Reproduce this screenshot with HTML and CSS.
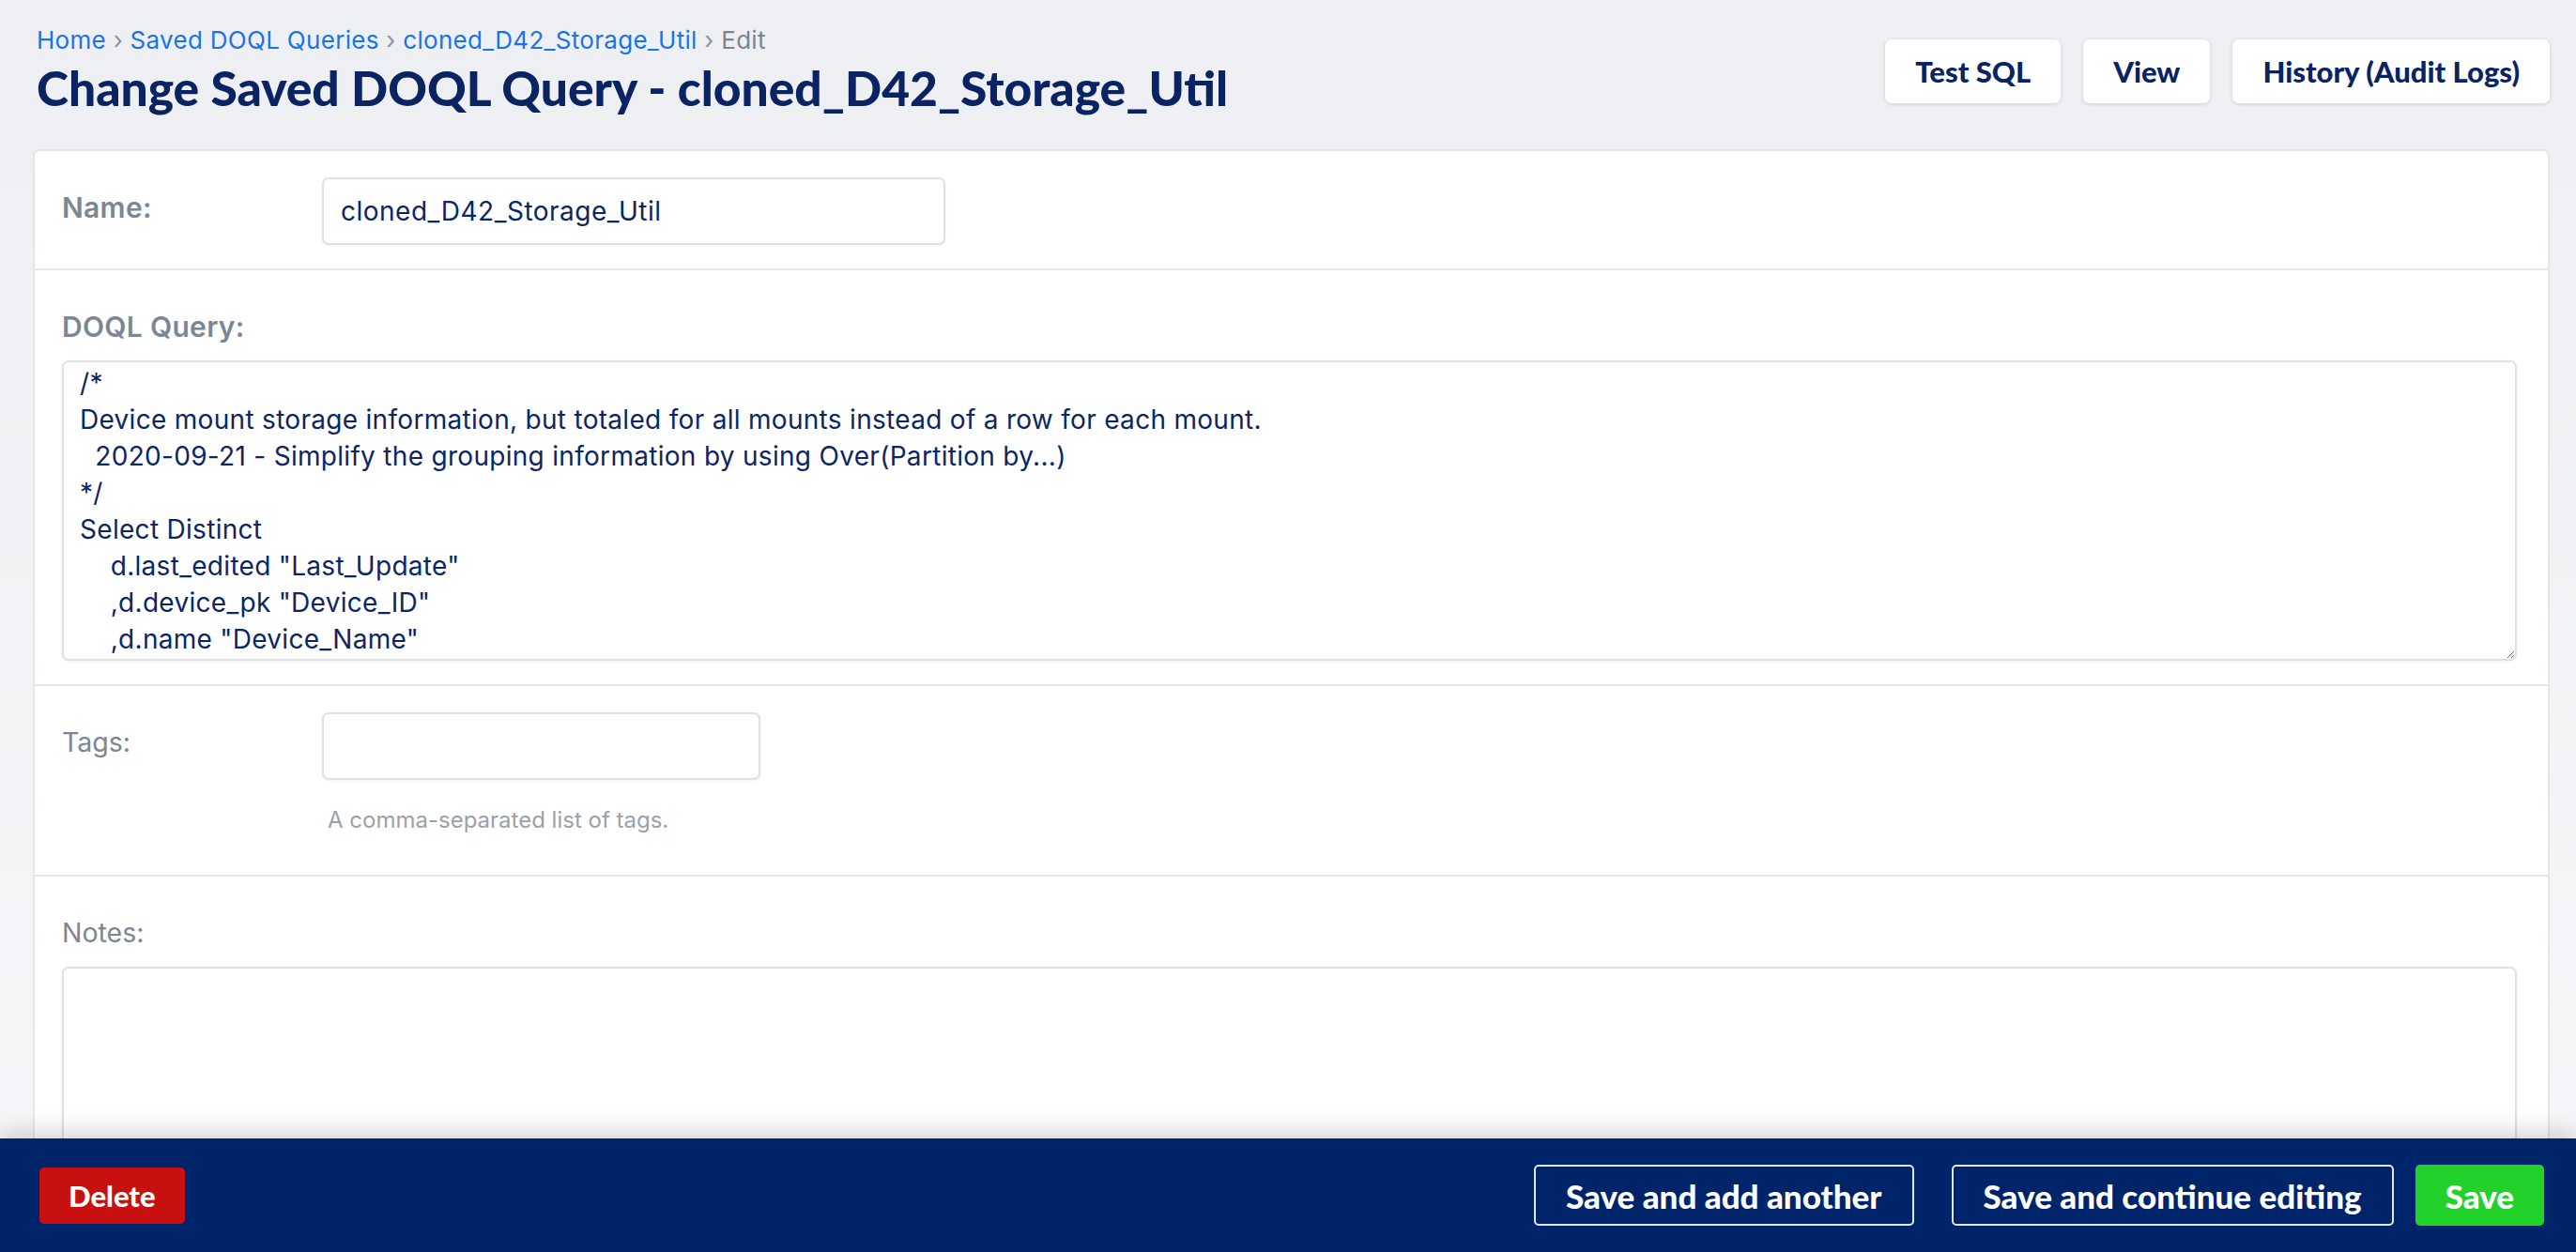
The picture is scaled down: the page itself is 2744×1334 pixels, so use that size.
FILE: index.html
```html
<!DOCTYPE html>
<html lang="en">
<head>
    <meta charset="UTF-8">
    <meta name="viewport" content="width=device-width, initial-scale=1.0">
    <title>Change Saved DOQL Query</title>
    <link rel="stylesheet" href="styles.css">
</head>
<body>
    <div class="page">
        <div class="header">
            <div class="header-text">
                <div class="breadcrumbs">
                    <a href="#">Home</a> <span class="sep">›</span>
                    <a href="#">Saved DOQL Queries</a> <span class="sep">›</span>
                    <a href="#">cloned_D42_Storage_Util</a> <span class="sep">›</span>
                    <span class="current">Edit</span>
                </div>
                <h1>Change Saved DOQL Query - cloned_D42_Storage_Util</h1>
            </div>
            <div class="header-actions">
                <a href="#" class="tool-button">Test SQL</a>
                <a href="#" class="tool-button">View</a>
                <a href="#" class="tool-button">History (Audit Logs)</a>
            </div>
        </div>

        <form class="card">
            <div class="form-row inline">
                <label class="field-label required" for="id_name">Name:</label>
                <div class="field">
                    <input type="text" id="id_name" class="text-input name-input" value="cloned_D42_Storage_Util">
                </div>
            </div>

            <div class="form-row">
                <label class="field-label required" for="id_query">DOQL Query:</label>
                <textarea id="id_query" class="text-area query-area">/*
Device mount storage information, but totaled for all mounts instead of a row for each mount.
  2020-09-21 - Simplify the grouping information by using Over(Partition by...)
*/
Select Distinct
    d.last_edited "Last_Update"
    ,d.device_pk "Device_ID"
    ,d.name "Device_Name"</textarea>
            </div>

            <div class="form-row inline">
                <label class="field-label" for="id_tags">Tags:</label>
                <div class="field">
                    <input type="text" id="id_tags" class="text-input tags-input">
                    <div class="help">A comma-separated list of tags.</div>
                </div>
            </div>

            <div class="form-row">
                <label class="field-label" for="id_notes">Notes:</label>
                <textarea id="id_notes" class="text-area notes-area"></textarea>
            </div>
        </form>
    </div>

    <div class="submit-row">
        <a href="#" class="delete-button">Delete</a>
        <div class="save-buttons">
            <button type="button" class="outline-button">Save and add another</button>
            <button type="button" class="outline-button">Save and continue editing</button>
            <button type="button" class="save-button">Save</button>
        </div>
    </div>
</body>
</html>
```

FILE: styles.css
```css
html, body {
    height: 100%;
}
body {
    margin: 0;
    font-family: Inter, "Noto Sans", sans-serif;
    color: #0b2663;
    background: linear-gradient(to bottom, #eeeff2, #f7f7fa);
    display: flex;
    flex-direction: column;
    overflow: hidden;
}
.page {
    flex: 1;
    overflow: hidden;
    padding: 0 28px 0 35px;
}
.header {
    display: flex;
    justify-content: space-between;
    align-items: flex-start;
    padding: 26px 0 0 4px;
}
.breadcrumbs {
    font-size: 26px;
    line-height: 34px;
    letter-spacing: 0.3px;
    color: #7b8591;
}
.breadcrumbs a {
    color: #1a73e8;
    text-decoration: none;
}
.breadcrumbs .sep {
    color: #8a939d;
}
h1 {
    margin: 3px 0 0 0;
    font-family: Lato, sans-serif;
    font-size: 51.5px;
    line-height: 60px;
    font-weight: 900;
    color: #0a2463;
}
.header-actions {
    display: flex;
    gap: 24px;
    margin-top: 16px;
}
.tool-button {
    display: flex;
    align-items: center;
    height: 68px;
    padding: 0 32px;
    box-sizing: border-box;
    background-color: white;
    border-radius: 7px;
    box-shadow: 0 1px 4px rgba(0, 0, 0, 0.14);
    color: #0a2463;
    font-family: Lato, sans-serif;
    font-size: 31px;
    font-weight: 900;
    text-decoration: none;
}
.card {
    margin: 36px 0 0 0;
    background-color: white;
    border: 2px solid #e4e6ea;
    border-radius: 7px;
}
.form-row {
    padding: 28px 33px 25px 29px;
    border-bottom: 2px solid #e4e6ea;
}
.form-row.inline {
    display: flex;
}
.field-label {
    display: block;
    padding-top: 12px;
    margin-bottom: 16px;
    font-size: 28.5px;
    line-height: 40px;
    color: #7b8794;
}
.form-row.inline .field-label {
    width: 277px;
    flex-shrink: 0;
    margin-bottom: 0;
}
.field-label.required {
    font-size: 30px;
    font-weight: 600;
    letter-spacing: 0.3px;
}
.text-input, .text-area {
    display: block;
    box-sizing: border-box;
    border: 2px solid #dfe1e5;
    border-radius: 7px;
    box-shadow: 0 1px 3px rgba(0, 0, 0, 0.06);
    background-color: white;
    font-family: Inter, "Noto Sans", sans-serif;
    font-size: 28px;
    letter-spacing: 0.3px;
    color: #0b2663;
    outline: none;
}
.text-input {
    height: 72px;
    padding: 0 18px;
}
.name-input {
    width: 664px;
    letter-spacing: 0.5px;
}
.tags-input {
    width: 467px;
}
.help {
    margin: 26px 0 16px 6px;
    font-size: 24px;
    line-height: 34px;
    color: #9ba1a9;
}
.text-area {
    width: 100%;
    line-height: 39px;
    padding: 3px 17px 0 17px;
    overflow: hidden;
}
.query-area {
    height: 320px;
}
.notes-area {
    height: 300px;
}
.submit-row {
    flex-shrink: 0;
    height: 121px;
    display: flex;
    align-items: center;
    justify-content: space-between;
    padding: 0 34px 0 42px;
    background-color: #00246a;
    box-shadow: 0 -6px 24px rgba(0, 0, 0, 0.18);
    position: relative;
}
.delete-button {
    display: flex;
    align-items: center;
    height: 60px;
    padding: 0 31px;
    box-sizing: border-box;
    background-color: #c81010;
    border-radius: 5px;
    color: white;
    font-family: Lato, sans-serif;
    font-size: 31px;
    font-weight: 900;
    text-decoration: none;
}
.save-buttons {
    display: flex;
    align-items: center;
}
.outline-button, .save-button {
    height: 65px;
    padding: 0 32px;
    border-radius: 5px;
    font-family: Lato, sans-serif;
    font-size: 35px;
    font-weight: 900;
    color: white;
    cursor: pointer;
}
.outline-button {
    background: transparent;
    border: 2px solid #e2e6ee;
    margin-right: 40px;
}
.outline-button + .outline-button {
    margin-right: 23px;
}
.save-button {
    background-color: #22d12a;
    border: none;
}
```
